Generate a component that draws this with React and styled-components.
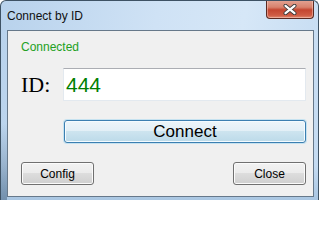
import React from "react";
import styled, { createGlobalStyle } from "styled-components";

const GlobalStyle = createGlobalStyle`
  html, body {
    margin: 0;
    padding: 0;
    background: #ffffff;
  }
  * { box-sizing: border-box; }
`

const uiFont = `"Liberation Sans", Arial, sans-serif`

const Window = styled.div`
  width: 319px;
  height: 200px;
  overflow: hidden;
  display: flex;
  flex-direction: column;
  border: 1px solid #3e5264;
  border-bottom: none;
  border-radius: 6px 6px 0 0;
  background: linear-gradient(100deg, #b8d2ec 0%, #cfe2f5 45%, #d6e7f7 70%, #c3daf1 100%);
`

const TitleBar = styled.div`
  height: 29px;
  flex: none;
  display: flex;
  justify-content: space-between;
  align-items: flex-start;
  padding-left: 6px;
  padding-right: 4px;
`

const Title = styled.span`
  font-family: ${uiFont};
  font-size: 12px;
  line-height: 15px;
  margin-top: 8px;
  color: #111;
`

const CloseButton = styled.div`
  width: 48px;
  height: 19px;
  margin-top: -1px;
  display: flex;
  align-items: center;
  justify-content: center;
  border: 1px solid #5a2a22;
  border-top: none;
  border-radius: 0 0 4px 4px;
  background: linear-gradient(#e3a595 0%, #d8826d 40%, #c44630 55%, #cf5c44 85%, #e08a70 100%);
  box-shadow: inset 0 0 0 1px rgba(255, 220, 210, 0.45);
`

const FrameBody = styled.div`
  flex: 1;
  padding: 0 4px 0 6px;
  background:
    linear-gradient(180deg, rgba(70, 100, 130, 0) 55%, rgba(70, 100, 130, 0.55) 100%) left / 6px 100% no-repeat,
    linear-gradient(180deg, transparent 0%, transparent 80%, #a9c6e2 100%);
`

const Client = styled.div`
  height: 167px;
  border: 1px solid #66788a;
  background: #f0f0f0;
  padding: 9px 7px 0 13px;
  display: flex;
  flex-direction: column;
`

const Status = styled.div`
  font-family: ${uiFont};
  font-size: 12px;
  line-height: 15px;
  color: #23a023;
`

const IdRow = styled.div`
  margin-top: 13px;
  display: flex;
  align-items: center;
`

const IdLabel = styled.span`
  width: 42px;
  font-family: "Liberation Serif", "Times New Roman", serif;
  font-size: 22px;
  color: #000;
`

const IdInput = styled.div`
  width: 243px;
  height: 33px;
  border: 1px solid #e3e9ef;
  border-top-color: #abadb3;
  background: #fff;
  padding-left: 2px;
  display: flex;
  align-items: center;
  font-family: ${uiFont};
  font-size: 21px;
  color: #008000;
`

const Button = styled.div`
  width: ${p => p.$width}px;
  height: 23px;
  display: flex;
  align-items: center;
  justify-content: center;
  border: 1px solid #707070;
  border-radius: 3px;
  background: linear-gradient(#f2f2f2 0%, #ebebeb 50%, #dddddd 50%, #cfcfcf 100%);
  box-shadow: inset 0 0 0 1px #fbfbfb;
  font-family: ${uiFont};
  font-size: 12px;
  color: #000;
`

const ConnectButton = styled(Button)`
  margin: 19px 0 0 43px;
  border-color: #3c7fb1;
  background: linear-gradient(#edf5fa 0%, #e2eff6 50%, #cde4ef 50%, #bcdae9 100%);
  box-shadow: inset 0 0 0 1px #f4fbff, 0 0 0 1px rgba(120, 200, 240, 0.35);
  font-size: 17px;
`

const BottomRow = styled.div`
  margin-top: 19px;
  display: flex;
  justify-content: space-between;
`

const CloseGlyph = () => (
  <svg width="14" height="11" viewBox="0 0 14 11">
    <path d="M2.5 1.8 L11.5 9.2 M11.5 1.8 L2.5 9.2" stroke="#3b3b3b" strokeWidth="4" strokeLinecap="round" />
    <path d="M2.5 1.8 L11.5 9.2 M11.5 1.8 L2.5 9.2" stroke="#ffffff" strokeWidth="2.2" strokeLinecap="round" />
  </svg>
)

const App = () => {
  return (
    <>
      <GlobalStyle />
      <Window>
        <TitleBar>
          <Title>Connect by ID</Title>
          <CloseButton><CloseGlyph /></CloseButton>
        </TitleBar>
        <FrameBody>
          <Client>
            <Status>Connected</Status>
            <IdRow>
              <IdLabel>ID:</IdLabel>
              <IdInput>444</IdInput>
            </IdRow>
            <ConnectButton $width={242}>Connect</ConnectButton>
            <BottomRow>
              <Button $width={73}>Config</Button>
              <Button $width={73}>Close</Button>
            </BottomRow>
          </Client>
        </FrameBody>
      </Window>
    </>
  )
}

export default App
